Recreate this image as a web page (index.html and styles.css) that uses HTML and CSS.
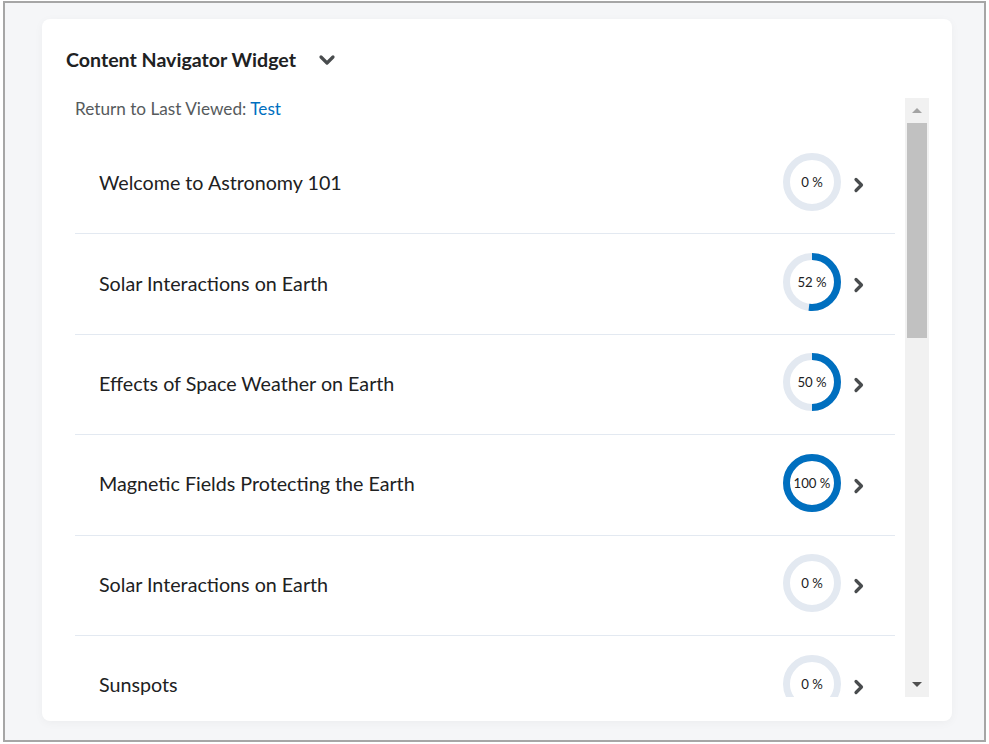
FILE: index.html
```html
<!DOCTYPE html>
<html lang="en">
<head>
  <meta charset="UTF-8">
  <title>Content Navigator Widget</title>
  <link rel="stylesheet" href="styles.css">
</head>
<body>

<div class="frame">
  <div class="card">
    <div class="card-header">
      <h2 class="card-title">Content Navigator Widget</h2>
      <svg class="collapse-icon" width="18" height="12" viewBox="0 0 18 12">
        <path d="M3 3 L9 9 L15 3" fill="none" stroke="#494c4e" stroke-width="3.2" stroke-linecap="round" stroke-linejoin="round"/>
      </svg>
    </div>

    <div class="scroll-area">
      <div class="list">
        <div class="last-viewed">Return to Last Viewed: <a href="#">Test</a></div>

        <div class="row">
          <span class="row-title">Welcome to Astronomy 101</span>
          <div class="progress">
            <svg viewBox="0 0 58 58" width="58" height="58">
              <circle class="track" cx="29" cy="29" r="25.5"/>
            </svg>
            <span class="pct">0 %</span>
          </div>
          <svg class="chevron" width="12" height="16" viewBox="0 0 12 16"><path d="M3 2.5 L8.5 8 L3 13.5"/></svg>
        </div>

        <div class="row">
          <span class="row-title">Solar Interactions on Earth</span>
          <div class="progress">
            <svg viewBox="0 0 58 58" width="58" height="58">
              <circle class="track" cx="29" cy="29" r="25.5"/>
              <circle class="bar" cx="29" cy="29" r="25.5" pathLength="100" stroke-dasharray="52 100"/>
            </svg>
            <span class="pct">52 %</span>
          </div>
          <svg class="chevron" width="12" height="16" viewBox="0 0 12 16"><path d="M3 2.5 L8.5 8 L3 13.5"/></svg>
        </div>

        <div class="row">
          <span class="row-title">Effects of Space Weather on Earth</span>
          <div class="progress">
            <svg viewBox="0 0 58 58" width="58" height="58">
              <circle class="track" cx="29" cy="29" r="25.5"/>
              <circle class="bar" cx="29" cy="29" r="25.5" pathLength="100" stroke-dasharray="50 100"/>
            </svg>
            <span class="pct">50 %</span>
          </div>
          <svg class="chevron" width="12" height="16" viewBox="0 0 12 16"><path d="M3 2.5 L8.5 8 L3 13.5"/></svg>
        </div>

        <div class="row">
          <span class="row-title">Magnetic Fields Protecting the Earth</span>
          <div class="progress">
            <svg viewBox="0 0 58 58" width="58" height="58">
              <circle class="track" cx="29" cy="29" r="25.5"/>
              <circle class="bar" cx="29" cy="29" r="25.5" pathLength="100" stroke-dasharray="100 100"/>
            </svg>
            <span class="pct">100 %</span>
          </div>
          <svg class="chevron" width="12" height="16" viewBox="0 0 12 16"><path d="M3 2.5 L8.5 8 L3 13.5"/></svg>
        </div>

        <div class="row">
          <span class="row-title">Solar Interactions on Earth</span>
          <div class="progress">
            <svg viewBox="0 0 58 58" width="58" height="58">
              <circle class="track" cx="29" cy="29" r="25.5"/>
            </svg>
            <span class="pct">0 %</span>
          </div>
          <svg class="chevron" width="12" height="16" viewBox="0 0 12 16"><path d="M3 2.5 L8.5 8 L3 13.5"/></svg>
        </div>

        <div class="row">
          <span class="row-title">Sunspots</span>
          <div class="progress">
            <svg viewBox="0 0 58 58" width="58" height="58">
              <circle class="track" cx="29" cy="29" r="25.5"/>
            </svg>
            <span class="pct">0 %</span>
          </div>
          <svg class="chevron" width="12" height="16" viewBox="0 0 12 16"><path d="M3 2.5 L8.5 8 L3 13.5"/></svg>
        </div>
      </div>

      <!-- fake scrollbar -->
      <div class="scrollbar">
        <div class="sb-btn"><span class="arrow-up"></span></div>
        <div class="sb-track"><div class="sb-thumb"></div></div>
        <div class="sb-btn"><span class="arrow-down"></span></div>
      </div>
    </div>
  </div>
</div>

</body>
</html>
```

FILE: styles.css
```css
* {
  margin: 0;
  padding: 0;
  box-sizing: border-box;
}
body {
  font-family: Lato, 'Noto Sans', sans-serif;
  background: #ffffff;
  color: #202122;
}
.frame {
  margin: 1px 3px 0 3px;
  height: 741px;
  border: 2px solid #a6a6a6;
  background: #f5f6f8;
  padding: 16px 32px 19px 37px;
}
.card {
  height: 100%;
  background: #fff;
  border-radius: 8px;
  box-shadow: 0 2px 10px rgba(0, 0, 0, 0.04);
  padding: 23px 23px 24px 24px;
  display: flex;
  flex-direction: column;
}
.card-header {
  height: 34px;
  margin-bottom: 22px;
  display: flex;
  align-items: center;
}
.card-title {
  font-size: 19.6px;
  font-weight: bold;
  color: #202122;
}
.collapse-icon {
  margin-left: 22px;
  margin-top: 2px;
}
.scroll-area {
  flex: 1;
  display: flex;
  min-height: 0;
}
.list {
  flex: 1;
  margin-left: 9px;
  margin-right: 10px;
  overflow: hidden;
}
.last-viewed {
  font-size: 17.2px;
  line-height: 22px;
  color: #565a5c;
  margin-bottom: 14px;
}
.last-viewed a {
  color: #006fbf;
  text-decoration: none;
}
.row {
  height: 100.4px;
  border-bottom: 1px solid #e3e9f1;
  display: flex;
  align-items: center;
  padding: 0 30px 2px 24px;
}
.row-title {
  flex: 1;
  font-size: 19.7px;
  color: #202122;
}
.progress {
  position: relative;
  width: 58px;
  height: 58px;
  margin-top: -2px;
}
.progress svg {
  display: block;
  transform: rotate(-90deg);
}
.track {
  fill: none;
  stroke: #e3e9f1;
  stroke-width: 7;
}
.bar {
  fill: none;
  stroke: #006fbf;
  stroke-width: 7;
}
.pct {
  position: absolute;
  inset: 0;
  display: flex;
  align-items: center;
  justify-content: center;
  font-size: 13.2px;
  color: #202122;
}
.chevron {
  margin-left: 12px;
  margin-top: 4px;
}
.chevron path {
  fill: none;
  stroke: #494c4e;
  stroke-width: 3.2;
  stroke-linecap: round;
  stroke-linejoin: round;
}
.scrollbar {
  width: 24px;
  background: #f1f1f1;
  display: flex;
  flex-direction: column;
}
.sb-btn {
  height: 25px;
  display: flex;
  align-items: center;
  justify-content: center;
}
.sb-track {
  flex: 1;
  padding: 0 2px;
}
.sb-thumb {
  height: 215px;
  background: #c1c1c1;
}
.arrow-up {
  width: 0;
  height: 0;
  border-left: 5px solid transparent;
  border-right: 5px solid transparent;
  border-bottom: 5px solid #a3a3a3;
}
.arrow-down {
  width: 0;
  height: 0;
  border-left: 5px solid transparent;
  border-right: 5px solid transparent;
  border-top: 5px solid #505050;
}
```
